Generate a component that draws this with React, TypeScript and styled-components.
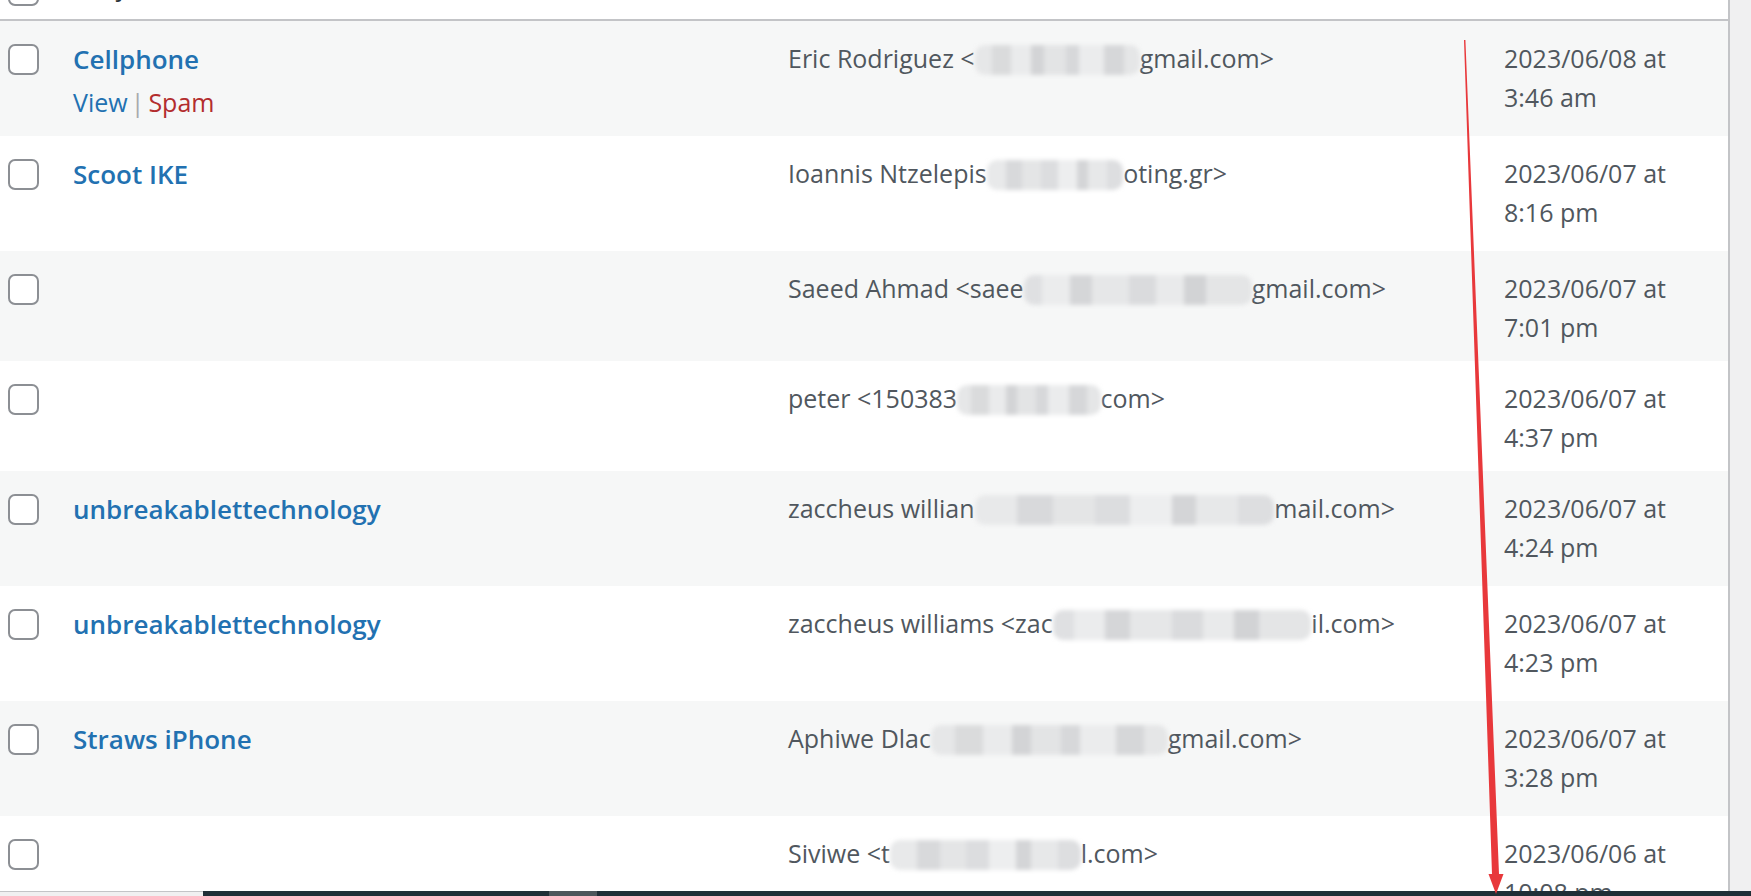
import React from "react";
import styled, { createGlobalStyle } from "styled-components";

const GlobalStyle = createGlobalStyle`
  html, body {
    margin: 0;
    padding: 0;
    height: 100%;
    overflow: hidden;
    background: #f0f0f1;
  }
  body {
    font-family: "Open Sans", "Noto Sans", sans-serif;
    color: #50575e;
  }
  * { box-sizing: border-box; }
`;

const Page = styled.div`
  position: relative;
  width: 100vw;
  height: 100vh;
  display: flex;
  flex-direction: column;
  overflow: hidden;
  background: #f0f0f1;
`;

const Viewport = styled.div`
  flex: 1;
  min-height: 0;
  overflow: hidden;
  display: flex;
  align-items: flex-start;
`;

const Table = styled.div`
  width: 1730px;
  flex: none;
  margin-top: -53px;
  background: #fff;
  border-right: 2px solid #c3c4c7;
`;

const columns = "73px 715px 716px 1fr";

const HeadRow = styled.div`
  display: grid;
  grid-template-columns: ${columns};
  align-items: end;
  height: 74px;
  background: #fff;
  border-bottom: 2px solid #c3c4c7;
`;

const HeadCell = styled.div`
  padding-bottom: 13px;
  font-size: 25px;
  line-height: 39px;
  color: #2c3338;
  white-space: nowrap;
`;

const Row = styled.div<{ $alt: boolean }>`
  display: grid;
  grid-template-columns: ${columns};
  background: ${(p) => (p.$alt ? "#f6f7f7" : "#ffffff")};
`;

const Cell = styled.div`
  padding-top: 18px;
  padding-bottom: 14px;
  min-width: 0;
`;

const CheckCell = styled.div<{ $head?: boolean }>`
  padding-left: 8px;
  padding-top: ${(p) => (p.$head ? "0" : "23px")};
  padding-bottom: ${(p) => (p.$head ? "13px" : "0")};
`;

const Checkbox = styled.input.attrs({ type: "checkbox" })`
  appearance: none;
  -webkit-appearance: none;
  display: block;
  margin: 0;
  width: 31px;
  height: 31px;
  border: 2px solid #8c8f94;
  border-radius: 7px;
  background: #fff;
`;

const TitleLink = styled.a`
  display: block;
  font-size: 26px;
  font-weight: 600;
  line-height: 40px;
  color: #2271b1;
  text-decoration: none;
  white-space: nowrap;
`;

const RowActions = styled.div<{ $visible: boolean }>`
  padding-top: 4px;
  font-size: 25px;
  line-height: 39px;
  color: #a7aaad;
  visibility: ${(p) => (p.$visible ? "visible" : "hidden")};
  white-space: nowrap;
`;

const ActionLink = styled.a<{ $danger?: boolean }>`
  color: ${(p) => (p.$danger ? "#b32d2e" : "#2271b1")};
  text-decoration: none;
`;

const Sep = styled.span`
  margin: 0 4px 0 3px;
  color: #a7aaad;
`;

const FromLine = styled.div`
  display: flex;
  align-items: center;
  font-size: 25px;
  line-height: 39px;
  color: #50575e;
  white-space: nowrap;
`;

const Redaction = styled.span`
  flex: 1;
  min-width: 10px;
  height: 30px;
  margin-top: 2px;
  border-radius: 10px;
  filter: blur(2px);
`;

const DateText = styled.div`
  font-size: 25px;
  line-height: 39px;
  color: #50575e;
  white-space: nowrap;
`;

const DateLine = styled.span`
  display: block;
`;

const BottomBar = styled.div`
  height: 5px;
  flex: none;
  display: flex;
`;

const BarLeft = styled.div`
  width: 203px;
  background: #f0f0f1;
  border-top: 1px solid #c3c4c7;
`;

const BarDark = styled.div`
  flex: 1;
  background: #1f2f37;
  display: flex;
`;

const BarThumb = styled.div`
  width: 48px;
  margin-left: 346px;
  background: #4d575c;
`;

const Overlay = styled.svg`
  position: absolute;
  left: 0;
  top: 0;
  width: 1751px;
  height: 896px;
  pointer-events: none;
`;

const mosaics = [
  "linear-gradient(90deg, #e6e7e8 0 10%, #dadbdc 10% 22%, #eaebec 22% 34%, #d3d4d6 34% 42%, #e3e4e5 42% 55%, #d7d8da 55% 63%, #ebeced 63% 78%, #d6d7d9 78% 90%, #e5e6e7 90% 100%)",
  "linear-gradient(90deg, #e8e9ea 0 14%, #d8d9db 14% 26%, #e4e5e6 26% 40%, #dcdddf 40% 52%, #edeeef 52% 66%, #d4d5d7 66% 74%, #e7e8e9 74% 88%, #dddee0 88% 100%)",
  "linear-gradient(90deg, #dfe0e2 0 8%, #ebeced 8% 20%, #d5d6d8 20% 30%, #e6e7e8 30% 46%, #dadbdd 46% 58%, #e9eaeb 58% 70%, #d2d3d5 70% 80%, #e4e5e6 80% 100%)",
];

type Msg = {
  title?: string;
  actions?: boolean;
  prefix: string;
  suffix: string;
  width: number;
  date: string;
  time: string;
};

const messages: Msg[] = [
  { title: "Cellphone", actions: true, prefix: "Eric Rodriguez <", suffix: "gmail.com>", width: 486, date: "2023/06/08 at", time: "3:46 am" },
  { title: "Scoot IKE", prefix: "Ioannis Ntzelepis ", suffix: "oting.gr>", width: 439, date: "2023/06/07 at", time: "8:16 pm" },
  { prefix: "Saeed Ahmad <saee", suffix: "gmail.com>", width: 598, date: "2023/06/07 at", time: "7:01 pm" },
  { prefix: "peter <150383", suffix: "com>", width: 377, date: "2023/06/07 at", time: "4:37 pm" },
  { title: "unbreakablettechnology", prefix: "zaccheus willian", suffix: "mail.com>", width: 607, date: "2023/06/07 at", time: "4:24 pm" },
  { title: "unbreakablettechnology", prefix: "zaccheus williams <zac", suffix: "il.com>", width: 607, date: "2023/06/07 at", time: "4:23 pm" },
  { title: "Straws iPhone", prefix: "Aphiwe Dlac", suffix: "gmail.com>", width: 514, date: "2023/06/07 at", time: "3:28 pm" },
  { prefix: "Siviwe <t", suffix: "l.com>", width: 370, date: "2023/06/06 at", time: "10:08 pm" },
];

export default function App() {
  return (
    <>
      <GlobalStyle />
      <Page>
        <Viewport>
          <Table>
            <HeadRow>
              <CheckCell $head>
                <Checkbox readOnly />
              </CheckCell>
              <HeadCell>Subject</HeadCell>
              <HeadCell>From</HeadCell>
              <HeadCell>Date</HeadCell>
            </HeadRow>
            {messages.map((m, i) => (
              <Row key={i} $alt={i % 2 === 0}>
                <CheckCell>
                  <Checkbox readOnly />
                </CheckCell>
                <Cell>
                  {m.title && (
                    <>
                      <TitleLink href="#">{m.title}</TitleLink>
                      <RowActions $visible={!!m.actions}>
                        <ActionLink href="#">View</ActionLink>
                        <Sep>|</Sep>
                        <ActionLink href="#" $danger>
                          Spam
                        </ActionLink>
                      </RowActions>
                    </>
                  )}
                </Cell>
                <Cell>
                  <FromLine style={{ width: m.width }}>
                    <span>{m.prefix}</span>
                    <Redaction style={{ background: mosaics[i % mosaics.length] }} />
                    <span>{m.suffix}</span>
                  </FromLine>
                </Cell>
                <Cell>
                  <DateText>
                    <DateLine>{m.date}</DateLine>
                    <DateLine>{m.time}</DateLine>
                  </DateText>
                </Cell>
              </Row>
            ))}
          </Table>
        </Viewport>
        <BottomBar>
          <BarLeft />
          <BarDark>
            <BarThumb />
          </BarDark>
        </BottomBar>
        <Overlay viewBox="0 0 1751 896">
          <polygon
            points="1464,40 1465.4,40 1499,874 1503.5,874 1496,894 1488.5,874 1492,874"
            fill="#e8383b"
          />
        </Overlay>
      </Page>
    </>
  );
}
